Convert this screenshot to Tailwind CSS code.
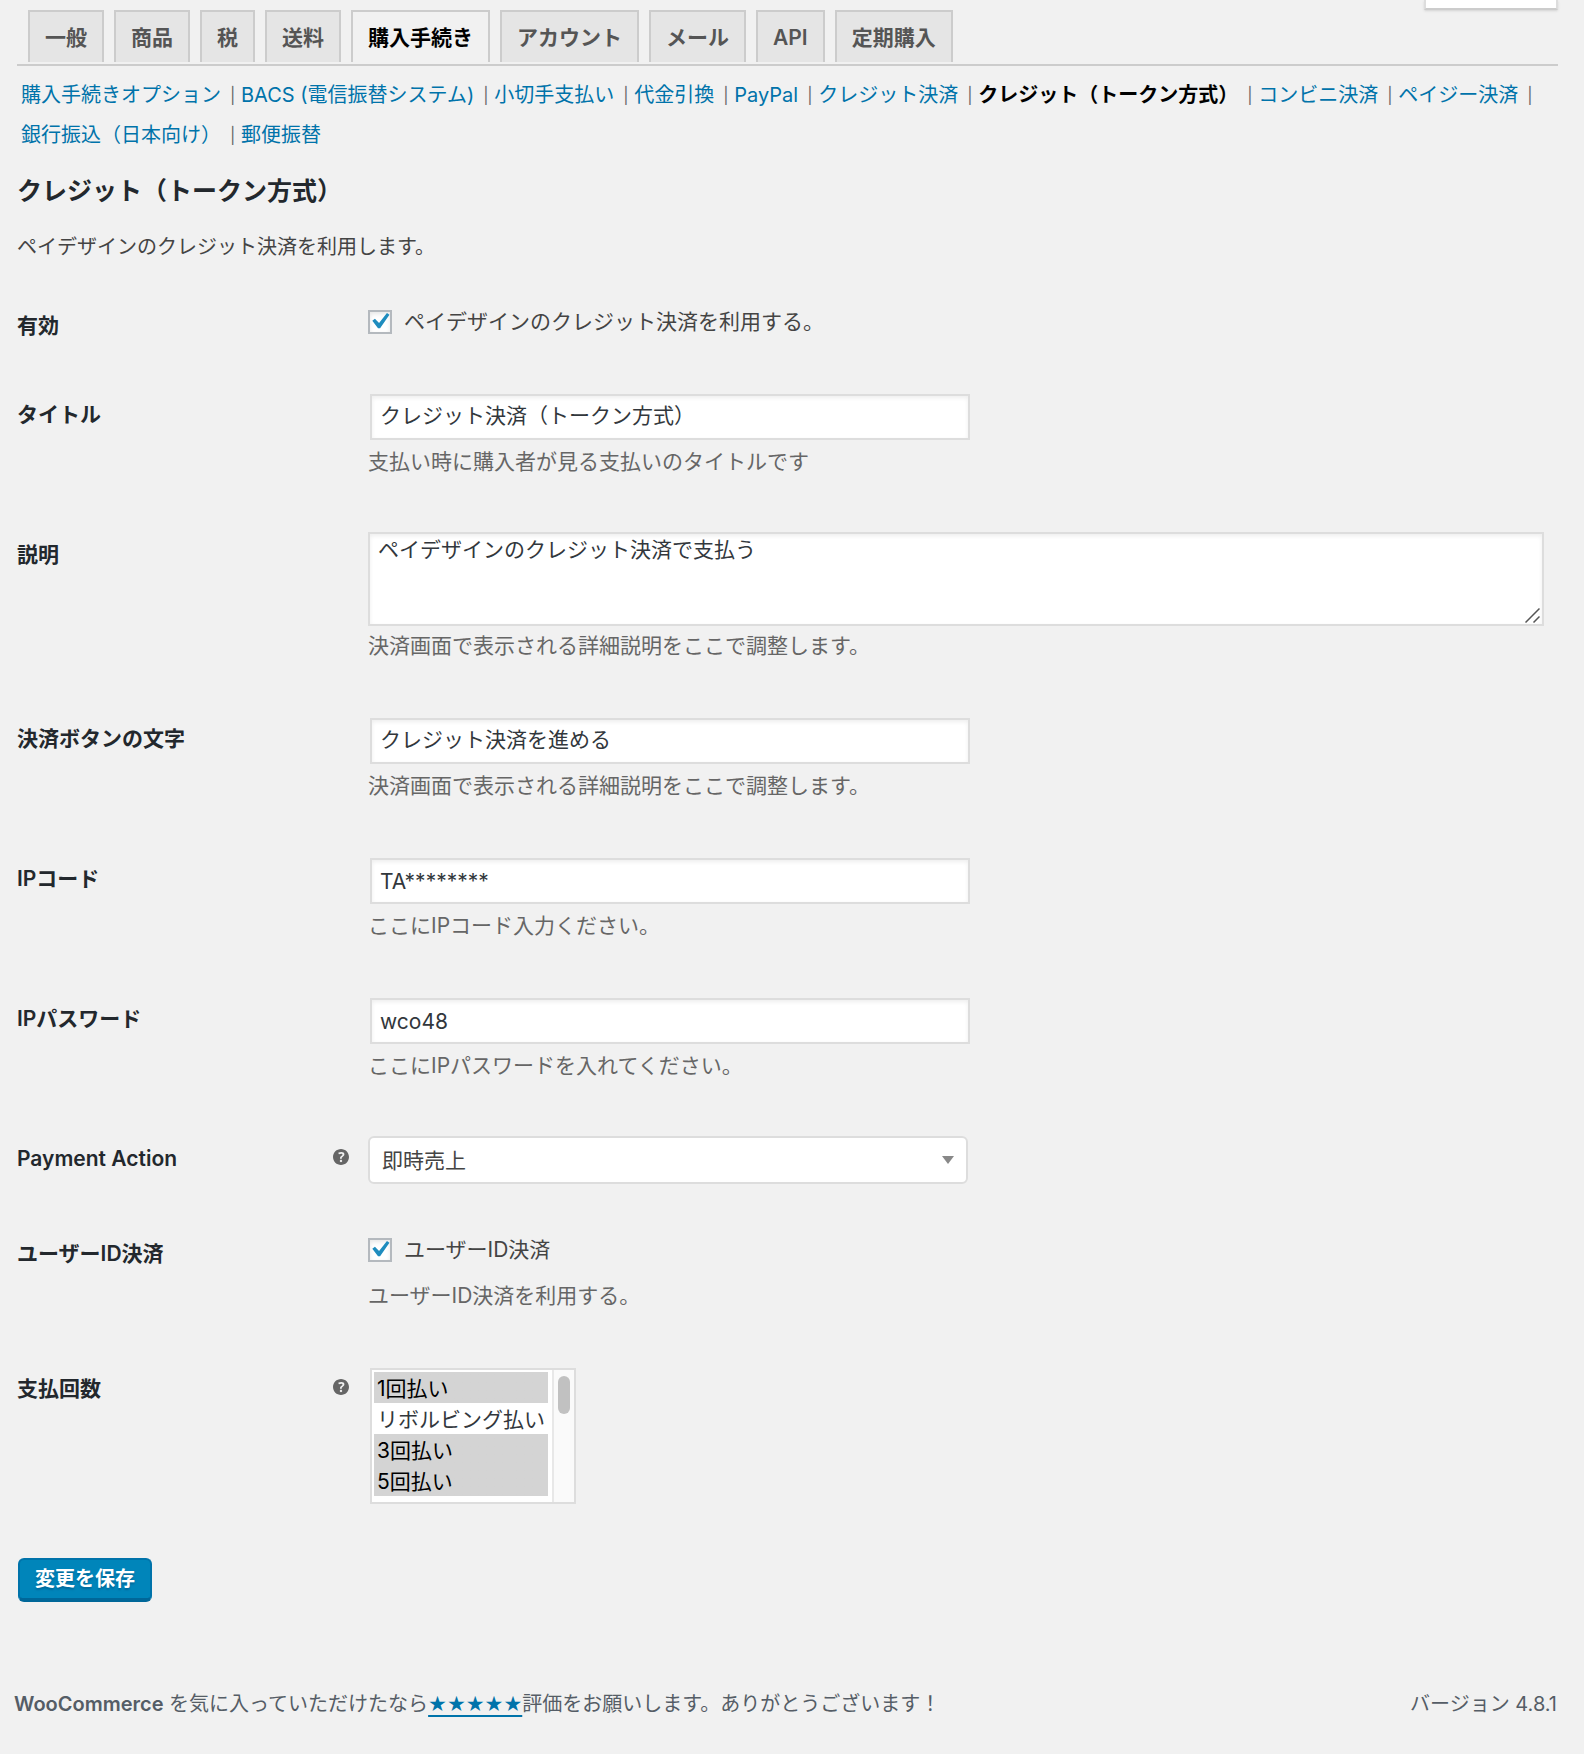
<!DOCTYPE html>
<html lang="ja">
<head>
<meta charset="utf-8">
<meta name="viewport" content="width=device-width, initial-scale=1">
<title>クレジット（トークン方式）</title>
<script src="https://cdn.jsdelivr.net/npm/@tailwindcss/browser@4"></script>
</head>
<body class="bg-[#f1f1f1] font-['Inter','Noto_Sans_CJK_JP',sans-serif] text-xl text-[#444]">
<!-- Bottom edge of the help / display options tab -->
<div class="flex h-[10px] justify-end pr-[26px]">
  <div class="h-[10px] w-[134px] border-2 border-t-0 border-[#ddd] border-b-[#ccc] bg-white shadow-sm"></div>
</div>

<main class="pr-[26px] pl-[17px]">
  <nav class="flex items-start gap-[10px] border-b-2 border-[#ccc] pb-[2px] pl-[11px] text-[21px] leading-[30px] font-bold whitespace-nowrap text-[#555]" aria-label="設定タブ">
    <a href="#" class="h-[52px] border-2 border-b-0 border-[#ccc] bg-[#e5e5e5] px-[15px] pt-[11px]">一般</a>
    <a href="#" class="h-[52px] border-2 border-b-0 border-[#ccc] bg-[#e5e5e5] px-[15px] pt-[11px]">商品</a>
    <a href="#" class="h-[52px] border-2 border-b-0 border-[#ccc] bg-[#e5e5e5] px-[15px] pt-[11px]">税</a>
    <a href="#" class="h-[52px] border-2 border-b-0 border-[#ccc] bg-[#e5e5e5] px-[15px] pt-[11px]">送料</a>
    <a href="#" aria-current="page" class="h-[52px] border-2 border-b-0 border-[#ccc] bg-[#f1f1f1] px-[15px] pt-[11px] text-black">購入手続き</a>
    <a href="#" class="h-[52px] border-2 border-b-0 border-[#ccc] bg-[#e5e5e5] px-[15px] pt-[11px]">アカウント</a>
    <a href="#" class="h-[52px] border-2 border-b-0 border-[#ccc] bg-[#e5e5e5] px-[15px] pt-[11px]">メール</a>
    <a href="#" class="h-[52px] border-2 border-b-0 border-[#ccc] bg-[#e5e5e5] px-[15px] pt-[11px] font-semibold">API</a>
    <a href="#" class="h-[52px] border-2 border-b-0 border-[#ccc] bg-[#e5e5e5] px-[15px] pt-[11px]">定期購入</a>
  </nav>

  <ul class="mt-[9px] flex flex-wrap pl-1 leading-10 whitespace-nowrap text-[#666]">
    <li class="flex"><a href="#" class="text-[#0073aa]">購入手続きオプション</a><span class="w-5 pl-[9px] text-base leading-10">|</span></li>
    <li class="flex"><a href="#" class="text-[#0073aa]">BACS (電信振替システム)</a><span class="w-5 pl-[9px] text-base leading-10">|</span></li>
    <li class="flex"><a href="#" class="text-[#0073aa]">小切手支払い</a><span class="w-5 pl-[9px] text-base leading-10">|</span></li>
    <li class="flex"><a href="#" class="text-[#0073aa]">代金引換</a><span class="w-5 pl-[9px] text-base leading-10">|</span></li>
    <li class="flex"><a href="#" class="text-[#0073aa]">PayPal</a><span class="w-5 pl-[9px] text-base leading-10">|</span></li>
    <li class="flex"><a href="#" class="text-[#0073aa]">クレジット決済</a><span class="w-5 pl-[9px] text-base leading-10">|</span></li>
    <li class="flex"><a href="#" class="font-bold text-black">クレジット（トークン方式）</a><span class="w-5 pl-[9px] text-base leading-10">|</span></li>
    <li class="flex"><a href="#" class="text-[#0073aa]">コンビニ決済</a><span class="w-5 pl-[9px] text-base leading-10">|</span></li>
    <li class="flex"><a href="#" class="text-[#0073aa]">ペイジー決済</a><span class="w-5 pl-[9px] text-base leading-10">|</span></li>
    <li class="flex"><a href="#" class="text-[#0073aa]">銀行振込（日本向け）</a><span class="w-5 pl-[9px] text-base leading-10">|</span></li>
    <li class="flex"><a href="#" class="text-[#0073aa]">郵便振替</a></li>
  </ul>

  <h2 class="mt-[18px] text-[25px] leading-9 font-bold text-[#23282d]">クレジット（トークン方式）</h2>
  <p class="mt-[23px] leading-[30px]">ペイデザインのクレジット決済を利用します。</p>

  <form>
    <table class="mt-[11px] w-full table-fixed border-collapse text-[21px] leading-[30px]">
      <colgroup><col class="w-[351px]"><col></colgroup>
      <tbody>
        <tr>
          <th scope="row" class="pt-[38px] pr-[19px] text-left align-top font-bold text-[#23282d]"><label for="enabled">有効</label></th>
          <td class="pt-[34px] pb-[25px] align-top">
            <label class="flex h-[30px] items-center gap-3">
              <span class="grid size-6">
                <input id="enabled" type="checkbox" checked class="col-start-1 row-start-1 size-6 appearance-none border-2 border-[#b4b9be] bg-white shadow-[inset_0_2px_4px_rgba(0,0,0,0.1)]">
                <svg class="pointer-events-none col-start-1 row-start-1 size-6 fill-[#1e8cbe]" viewBox="2.5 2.3 15.6 15.6" aria-hidden="true"><path d="M14.83 4.3l1.6 1.1-6.07 8.81H9.02L5.3 9.3l1.7-1.25 2.69 2.75z"/></svg>
              </span>
              ペイデザインのクレジット決済を利用する。
            </label>
          </td>
        </tr>
        <tr>
          <th scope="row" class="pt-[38px] pr-[19px] text-left align-top font-bold text-[#23282d]"><label for="title">タイトル</label></th>
          <td class="pt-[30px] pb-[25px] align-top">
            <input id="title" type="text" value="クレジット決済（トークン方式）" class="m-[2px] block h-[46px] w-[600px] border-2 border-[#ddd] bg-white px-2 pb-[6px] text-[#32373c] shadow-[inset_0_2px_4px_rgba(0,0,0,0.07)]">
            <p class="mt-[7px] text-[#666]">支払い時に購入者が見る支払いのタイトルです</p>
          </td>
        </tr>
        <tr>
          <th scope="row" class="pt-[38px] pr-[19px] text-left align-top font-bold text-[#23282d]"><label for="description">説明</label></th>
          <td class="pt-[30px] pr-[14px] pb-[25px] align-top">
            <div class="relative">
              <textarea id="description" class="block h-[94px] w-full resize-none border-2 border-[#ddd] bg-white px-2 py-[2px] leading-7 text-[#32373c] shadow-[inset_0_2px_4px_rgba(0,0,0,0.07)]">ペイデザインのクレジット決済で支払う</textarea>
              <svg class="pointer-events-none absolute right-1 bottom-[3px] size-[15px] stroke-[#555]" viewBox="0 0 15 15" fill="none" stroke-width="1.5" aria-hidden="true"><path d="M.5 14.5l14-14M8.500 14.500l6-6"/></svg>
            </div>
            <p class="mt-[5px] text-[#666]">決済画面で表示される詳細説明をここで調整します。</p>
          </td>
        </tr>
        <tr>
          <th scope="row" class="pt-[38px] pr-[19px] text-left align-top font-bold text-[#23282d]"><label for="button-text">決済ボタンの文字</label></th>
          <td class="pt-[30px] pb-[25px] align-top">
            <input id="button-text" type="text" value="クレジット決済を進める" class="m-[2px] block h-[46px] w-[600px] border-2 border-[#ddd] bg-white px-2 pb-[6px] text-[#32373c] shadow-[inset_0_2px_4px_rgba(0,0,0,0.07)]">
            <p class="mt-[7px] text-[#666]">決済画面で表示される詳細説明をここで調整します。</p>
          </td>
        </tr>
        <tr>
          <th scope="row" class="pt-[38px] pr-[19px] text-left align-top font-bold text-[#23282d]"><label for="ip-code"><span class="font-semibold">IP</span>コード</label></th>
          <td class="pt-[30px] pb-[25px] align-top">
            <input id="ip-code" type="text" value="TA********" class="m-[2px] block h-[46px] w-[600px] border-2 border-[#ddd] bg-white px-2 text-[#32373c] shadow-[inset_0_2px_4px_rgba(0,0,0,0.07)]">
            <p class="mt-[7px] text-[#666]">ここにIPコード入力ください。</p>
          </td>
        </tr>
        <tr>
          <th scope="row" class="pt-[38px] pr-[19px] text-left align-top font-bold text-[#23282d]"><label for="ip-password"><span class="font-semibold">IP</span>パスワード</label></th>
          <td class="pt-[30px] pb-[25px] align-top">
            <input id="ip-password" type="text" value="wco48" class="m-[2px] block h-[46px] w-[600px] border-2 border-[#ddd] bg-white px-2 text-[#32373c] shadow-[inset_0_2px_4px_rgba(0,0,0,0.07)]">
            <p class="mt-[7px] text-[#666]">ここにIPパスワードを入れてください。</p>
          </td>
        </tr>
        <tr>
          <th scope="row" class="pt-[38px] pr-[19px] text-left align-top font-semibold text-[#23282d]">
            <div class="flex justify-between">
              <label for="payment-action">Payment Action</label>
              <svg class="mt-[5px] size-4 fill-[#666]" viewBox="3 3 14 14" role="img" aria-label="ヘルプ"><path d="M17 10c0-3.87-3.14-7-7-7-3.87 0-7 3.13-7 7s3.13 7 7 7c3.86 0 7-3.13 7-7zm-6.3 1.48H9.14v-.43c0-.38.08-.7.24-.98s.46-.57.88-.89c.41-.29.68-.53.81-.71.14-.18.2-.39.2-.62 0-.25-.09-.44-.28-.58-.19-.13-.45-.19-.79-.19-.58 0-1.25.15-2 .46l-.64-1.28c.87-.49 1.8-.74 2.77-.74.81 0 1.45.2 1.92.58.48.39.71.91.71 1.55 0 .43-.09.8-.29 1.11-.19.32-.57.67-1.11 1.06-.38.28-.61.49-.71.63-.1.15-.15.34-.15.57v.46zm-1.47 2.74c-.18-.17-.27-.42-.27-.73 0-.33.08-.58.26-.75s.43-.25.77-.25c.32 0 .57.09.75.26s.27.42.27.74c0 .31-.09.56-.27.73-.18.18-.43.27-.75.27-.33 0-.58-.09-.76-.27z"/></svg>
            </div>
          </th>
          <td class="pt-[30px] pb-[17px] align-top">
            <div class="relative w-[600px]">
              <select id="payment-action" class="block h-12 w-full appearance-none rounded-md border-2 border-[#ddd] bg-white px-3 pt-[2px] text-[#444]">
                <option>即時売上</option>
                <option>仮売上</option>
              </select>
              <svg class="pointer-events-none absolute top-5 right-[14px] h-2 w-3 fill-[#888]" viewBox="0 0 12 8" aria-hidden="true"><path d="M0 0h12L6 8z"/></svg>
            </div>
          </td>
        </tr>
        <tr>
          <th scope="row" class="pt-[38px] pr-[19px] text-left align-top font-bold text-[#23282d]"><label for="user-id">ユーザー<span class="font-semibold">ID</span>決済</label></th>
          <td class="pt-[34px] pb-[25px] align-top">
            <label class="flex h-[30px] items-center gap-3">
              <span class="grid size-6">
                <input id="user-id" type="checkbox" checked class="col-start-1 row-start-1 size-6 appearance-none border-2 border-[#b4b9be] bg-white shadow-[inset_0_2px_4px_rgba(0,0,0,0.1)]">
                <svg class="pointer-events-none col-start-1 row-start-1 size-6 fill-[#1e8cbe]" viewBox="2.5 2.3 15.6 15.6" aria-hidden="true"><path d="M14.83 4.3l1.6 1.1-6.07 8.81H9.02L5.3 9.3l1.7-1.25 2.69 2.75z"/></svg>
              </span>
              ユーザーID決済
            </label>
            <p class="mt-4 text-[#666]">ユーザーID決済を利用する。</p>
          </td>
        </tr>
        <tr>
          <th scope="row" class="pt-[38px] pr-[19px] text-left align-top font-bold text-[#23282d]">
            <div class="flex justify-between">
              <label for="installments">支払回数</label>
              <svg class="mt-[5px] size-4 fill-[#666]" viewBox="3 3 14 14" role="img" aria-label="ヘルプ"><path d="M17 10c0-3.87-3.14-7-7-7-3.87 0-7 3.13-7 7s3.13 7 7 7c3.86 0 7-3.13 7-7zm-6.3 1.48H9.14v-.43c0-.38.08-.7.24-.98s.46-.57.88-.89c.41-.29.68-.53.81-.71.14-.18.2-.39.2-.62 0-.25-.09-.44-.28-.58-.19-.13-.45-.19-.79-.19-.58 0-1.25.15-2 .46l-.64-1.28c.87-.49 1.8-.74 2.77-.74.81 0 1.45.2 1.92.58.48.39.71.91.71 1.55 0 .43-.09.8-.29 1.11-.19.32-.57.67-1.11 1.06-.38.28-.61.49-.71.63-.1.15-.15.34-.15.57v.46zm-1.47 2.74c-.18-.17-.27-.42-.27-.73 0-.33.08-.58.26-.75s.43-.25.77-.25c.32 0 .57.09.75.26s.27.42.27.74c0 .31-.09.56-.27.73-.18.18-.43.27-.75.27-.33 0-.58-.09-.76-.27z"/></svg>
            </div>
          </th>
          <td class="pt-[30px] pb-[25px] align-top">
            <div class="m-[2px] flex h-[136px] w-[206px] border-2 border-[#ddd] bg-white">
              <select id="installments" multiple size="4" class="h-[130px] w-[180px] appearance-none overflow-x-hidden overflow-y-auto border-0 bg-white py-[2px] pr-1 pl-[2px] text-[#32373c] outline-none [scrollbar-width:none]">
                <option selected class="h-[31px] px-[3px] leading-7 checked:bg-[#d4d4d4] checked:bg-linear-to-b checked:from-[#d4d4d4] checked:to-[#d4d4d4] checked:text-black">1回払い</option>
                <option class="h-[31px] px-[3px] leading-7">リボルビング払い</option>
                <option selected class="h-[31px] px-[3px] leading-7 checked:bg-[#d4d4d4] checked:bg-linear-to-b checked:from-[#d4d4d4] checked:to-[#d4d4d4] checked:text-black">3回払い</option>
                <option selected class="h-[31px] px-[3px] leading-7 checked:bg-[#d4d4d4] checked:bg-linear-to-b checked:from-[#d4d4d4] checked:to-[#d4d4d4] checked:text-black">5回払い</option>
              </select>
              <div class="flex w-[22px] justify-center border-l-2 border-[#e8e8e8] bg-[#fafafa] pt-[6px]">
                <span class="h-[38px] w-3 rounded-full bg-[#c1c1c1]"></span>
              </div>
            </div>
          </td>
        </tr>
      </tbody>
    </table>

    <button type="submit" class="mt-[27px] ml-[1px] block h-11 w-[134px] rounded-md border-2 border-b-4 border-[#0073aa] border-b-[#006799] bg-[#0085ba] text-xl leading-9 font-bold whitespace-nowrap text-white text-shadow-[0_2px_2px_#006799]">変更を保存</button>
  </form>
</main>

<footer class="mt-[87px] flex justify-between pr-[27px] pb-[35px] pl-[14px] leading-[30px] text-[#555d66]">
  <p><strong class="font-semibold">WooCommerce</strong> を気に入っていただけたなら<a href="#" class="font-['DejaVu_Sans'] text-[21px] text-[#0073aa] underline decoration-2 underline-offset-4">★★★★★</a>評価をお願いします。ありがとうございます！</p>
  <p>バージョン 4.8.1</p>
</footer>
</body>
</html>
